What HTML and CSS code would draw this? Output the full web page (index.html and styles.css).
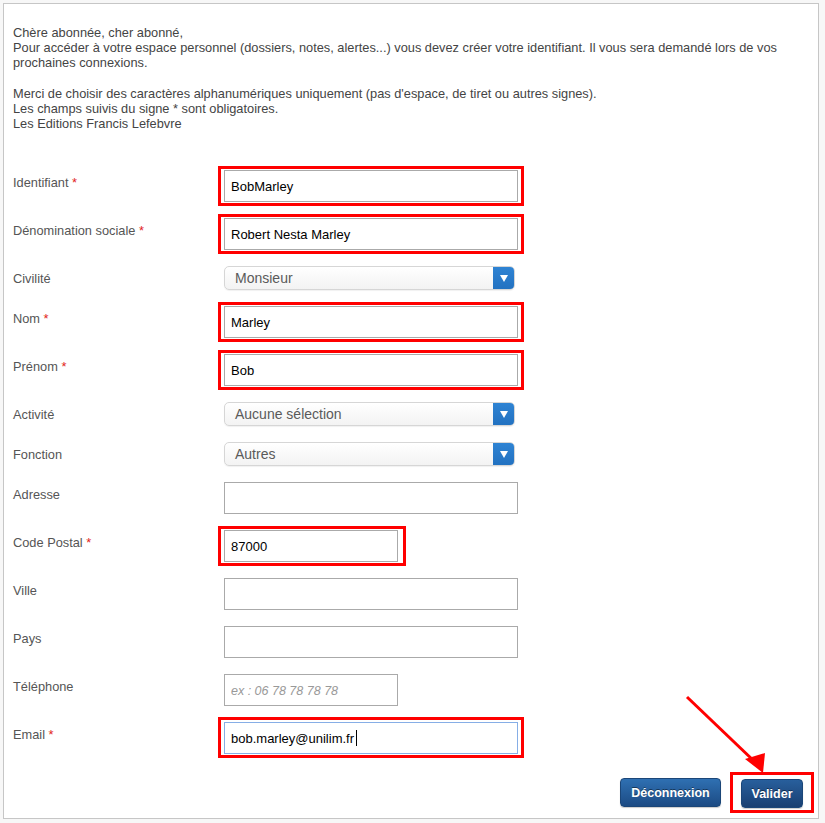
FILE: index.html
```html
<!DOCTYPE html>
<html lang="fr">
<head>
<meta charset="utf-8">
<title>Création de votre identifiant</title>
<link rel="stylesheet" href="styles.css">
</head>
<body>
<div class="panel">
  <div class="intro">
    <p>Chère abonnée, cher abonné,<br>Pour accéder à votre espace personnel (dossiers, notes, alertes...) vous devez créer votre identifiant. Il vous sera demandé lors de vos prochaines connexions.</p>
    <p>Merci de choisir des caractères alphanumériques uniquement (pas d'espace, de tiret ou autres signes).<br>Les champs suivis du signe * sont obligatoires.<br>Les Editions Francis Lefebvre</p>
  </div>
  <form class="form">
    <div class="row">
      <label class="lbl">Identifiant <span class="req">*</span></label>
      <div class="field"><span class="hl"><input class="txt" type="text" value="BobMarley"></span></div>
    </div>
    <div class="row">
      <label class="lbl">Dénomination sociale <span class="req">*</span></label>
      <div class="field"><span class="hl"><input class="txt" type="text" value="Robert Nesta Marley"></span></div>
    </div>
    <div class="row">
      <label class="lbl">Civilité</label>
      <div class="field"><div class="sel"><span class="sel-val">Monsieur</span><span class="sel-btn"></span></div></div>
    </div>
    <div class="row">
      <label class="lbl">Nom <span class="req">*</span></label>
      <div class="field"><span class="hl"><input class="txt" type="text" value="Marley"></span></div>
    </div>
    <div class="row">
      <label class="lbl">Prénom <span class="req">*</span></label>
      <div class="field"><span class="hl"><input class="txt" type="text" value="Bob"></span></div>
    </div>
    <div class="row">
      <label class="lbl">Activité</label>
      <div class="field"><div class="sel"><span class="sel-val">Aucune sélection</span><span class="sel-btn"></span></div></div>
    </div>
    <div class="row">
      <label class="lbl">Fonction</label>
      <div class="field"><div class="sel"><span class="sel-val">Autres</span><span class="sel-btn"></span></div></div>
    </div>
    <div class="row">
      <label class="lbl">Adresse</label>
      <div class="field"><input class="txt" type="text" value=""></div>
    </div>
    <div class="row">
      <label class="lbl">Code Postal <span class="req">*</span></label>
      <div class="field"><span class="hl hl-short"><input class="txt txt-short" type="text" value="87000"></span></div>
    </div>
    <div class="row">
      <label class="lbl">Ville</label>
      <div class="field"><input class="txt" type="text" value=""></div>
    </div>
    <div class="row">
      <label class="lbl">Pays</label>
      <div class="field"><input class="txt" type="text" value=""></div>
    </div>
    <div class="row">
      <label class="lbl">Téléphone</label>
      <div class="field"><input class="txt txt-short" type="text" placeholder="ex : 06 78 78 78 78"></div>
    </div>
    <div class="row">
      <label class="lbl">Email <span class="req">*</span></label>
      <div class="field"><span class="hl hl-mail"><input class="txt txt-focus" type="text" value="bob.marley@unilim.fr"><span class="caret"></span></span></div>
    </div>
  </form>
  <div class="actions">
    <button class="btn btn-logout" type="button">Déconnexion</button>
    <span class="hl hl-btn"><button class="btn btn-ok" type="button">Valider</button></span>
  </div>
</div>
<svg class="arrow" width="825" height="823" viewBox="0 0 825 823" aria-hidden="true">
  <line x1="687" y1="697" x2="755" y2="762" stroke="#f00" stroke-width="3"/>
  <polygon points="745,759 765,753 763,773" fill="#f00"/>
</svg>
</body>
</html>
```

FILE: styles.css
```css
html, body {
  margin: 0;
  padding: 0;
}
body {
  background: #f7f7f7;
  font-family: "Liberation Sans", Arial, sans-serif;
  width: 825px;
  height: 823px;
  position: relative;
  padding-top: 3px;
  padding-left: 3px;
  box-sizing: border-box;
}
.panel {
  width: 816px;
  box-sizing: border-box;
  background: #fff;
  border: 1px solid #c6c6c6;
  padding: 21px 9px 10px 9px;
}
.intro {
  color: #444;
  font-size: 12.8px;
  line-height: 15px;
}
.intro p {
  margin: 0 0 16px 0;
}
.intro p:last-child {
  margin-bottom: 0;
}
.form {
  margin: 39px 0 0 0;
}
.row {
  display: flex;
  align-items: flex-start;
  margin-bottom: 16px;
}
.lbl {
  width: 211px;
  flex: none;
  color: #555;
  font-size: 12.8px;
  line-height: 15px;
  padding-top: 5px;
}
.req {
  color: #e2231a;
}
.field {
  display: flex;
}
.hl {
  position: relative;
  display: inline-block;
}
.hl::after {
  content: "";
  position: absolute;
  top: -4px;
  bottom: -4px;
  left: -6px;
  right: -6px;
  border: 3px solid #f00;
  pointer-events: none;
}
.hl-short::after {
  right: -8px;
}
.hl-mail::after {
  top: -5px;
}
.hl-btn::after {
  top: -6px;
  bottom: -5px;
  left: -11px;
  right: -11px;
}
.txt {
  display: block;
  width: 294px;
  height: 32px;
  box-sizing: border-box;
  margin: 0;
  border: 1px solid #aaa;
  padding: 0 6px;
  font-family: "Liberation Sans", Arial, sans-serif;
  font-size: 13px;
  color: #000;
  background: #fff;
  outline: none;
  border-radius: 0;
}
.txt-short {
  width: 174px;
}
.txt::placeholder {
  color: #999;
  font-style: italic;
  font-size: 12.5px;
}
.txt-focus {
  border-color: #86aee6;
}
.caret {
  position: absolute;
  left: 132px;
  top: 8px;
  width: 1px;
  height: 16px;
  background: #000;
}
.sel {
  width: 291px;
  height: 24px;
  box-sizing: border-box;
  border: 1px solid #d6d6d6;
  border-radius: 5px;
  background: linear-gradient(#ffffff, #f3f3f3);
  box-shadow: 0 1px 1px rgba(0, 0, 0, 0.06);
  display: flex;
  align-items: center;
  position: relative;
  overflow: hidden;
}
.sel-val {
  flex: 1;
  padding-left: 10px;
  font-size: 14px;
  color: #5a5a5a;
  line-height: 22px;
}
.sel-btn {
  width: 22px;
  height: 24px;
  margin: -1px -1px -1px 0;
  background: linear-gradient(#2f84d4, #2271c0);
  border-radius: 0 5px 5px 0;
  position: relative;
  flex: none;
}
.sel-btn::after {
  content: "";
  position: absolute;
  left: 7px;
  top: 9px;
  border-left: 4px solid transparent;
  border-right: 4px solid transparent;
  border-top: 7px solid #fff;
}
.actions {
  display: flex;
  justify-content: flex-end;
  align-items: flex-start;
  gap: 20px;
  margin-top: 24px;
  padding-right: 6px;
}
.btn {
  display: block;
  height: 29px;
  margin: 0;
  padding: 0;
  border: 1px solid #1b4678;
  border-radius: 4px;
  background: linear-gradient(#2f70b2, #1c4b84);
  color: #fff;
  font-family: "Liberation Sans", Arial, sans-serif;
  font-weight: bold;
  font-size: 12.5px;
  text-shadow: 0 -1px 0 rgba(0, 0, 0, 0.45);
  box-shadow: 0 1px 1px rgba(0, 0, 0, 0.2);
}
.btn-logout {
  width: 101px;
}
.btn-ok {
  width: 62px;
  margin-top: 1px;
  background: linear-gradient(#285f9c, #193f72);
}
.arrow {
  position: absolute;
  left: 0;
  top: 0;
  pointer-events: none;
}
```
